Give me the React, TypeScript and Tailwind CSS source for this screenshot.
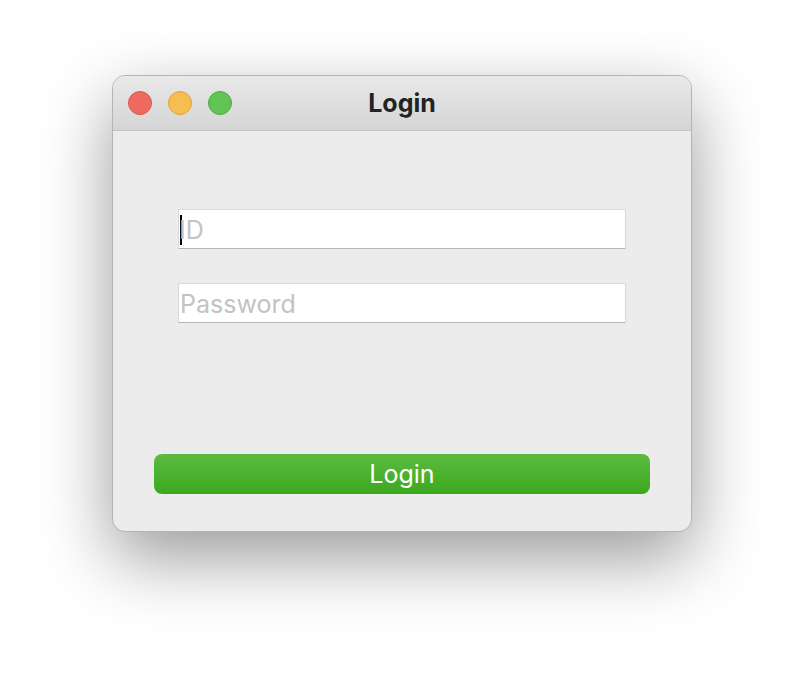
import React from "react";

const font = { fontFamily: "Inter, 'Noto Sans', 'Liberation Sans', sans-serif" };

export default function App() {
  return (
    <div className="w-[804px] h-[680px] bg-white pt-[75px] pl-[112px]" style={font}>
      <div className="w-[580px] h-[457px] rounded-[13px] bg-[#ececec] border border-[#b4b4b4] shadow-[0_26px_70px_rgba(0,0,0,0.4)] overflow-hidden flex flex-col">
        {/* title bar */}
        <div className="relative h-[55px] shrink-0 border-b border-[#c4c4c4] bg-gradient-to-b from-[#e9e9e9] to-[#d5d5d5] flex items-center justify-center">
          <div className="absolute left-[15px] top-[15px] flex gap-[16px]">
            <span className="w-[24px] h-[24px] rounded-full bg-[#ee6a5f] border border-[#d5584e]" />
            <span className="w-[24px] h-[24px] rounded-full bg-[#f6be50] border border-[#dea23a]" />
            <span className="w-[24px] h-[24px] rounded-full bg-[#61c454] border border-[#4fa942]" />
          </div>
          <span className="text-[25px] font-bold text-[#232323] leading-none">Login</span>
        </div>

        {/* body */}
        <div className="flex flex-col px-[41px] pt-[78px]">
          <div className="mx-[24px] h-[40px] bg-white border border-[#d9d9d9] border-b-[#b6b6b6] flex items-center pl-[1px] pt-[2px]">
            <span className="w-[2px] h-[30px] bg-black shrink-0" />
            <span className="text-[25px] text-[#c3c3c3] leading-none ml-[-3px]">ID</span>
          </div>
          <div className="mx-[24px] mt-[34px] h-[40px] bg-white border border-[#d9d9d9] border-b-[#b6b6b6] flex items-center pl-[1px] pt-[2px]">
            <span className="text-[25px] text-[#c3c3c3] leading-none">Password</span>
          </div>
          <button className="mt-[131px] h-[40px] rounded-[8px] bg-gradient-to-b from-[#5cbb3f] to-[#3aa81c] text-white text-[25px] leading-none flex items-center justify-center">
            Login
          </button>
        </div>
      </div>
    </div>
  );
}
